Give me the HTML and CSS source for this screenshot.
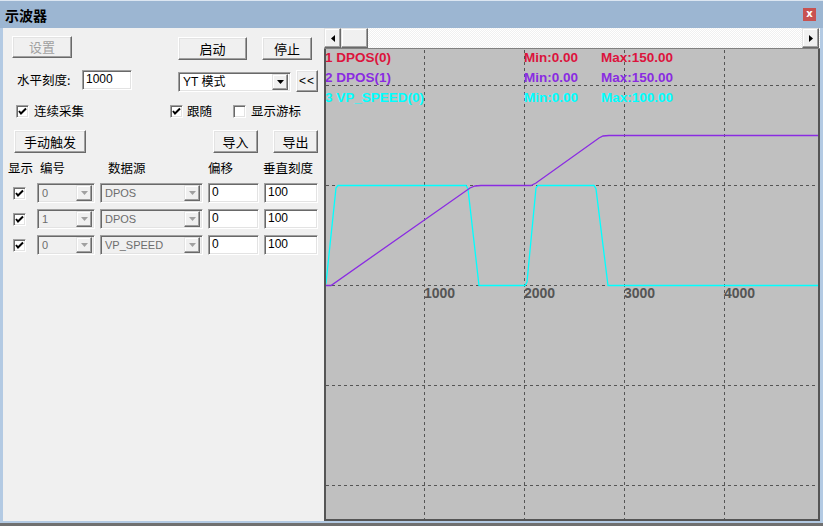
FILE: index.html
```html
<!DOCTYPE html>
<html>
<head>
<meta charset="utf-8">
<title>示波器</title>
<link rel="stylesheet" href="styles.css">
</head>
<body>
<div class="win">
  <div class="titlebar">
    <span class="title">示波器</span>
    <span class="close">x</span>
  </div>
  <div class="main">
    <div class="panel">
      <div class="row r1">
        <div class="btn disabled b-set">设置</div>
        <div class="btn b-start">启动</div>
        <div class="btn b-stop">停止</div>
      </div>
      <div class="row r2">
        <span class="lbl-scale">水平刻度:</span>
        <div class="edit e-scale">1000</div>
        <div class="combo c-mode">
          <span class="ctext">YT 模式</span>
          <span class="cbtn"><svg width="7" height="4" viewBox="0 0 7 4"><path d="M0 0H7L3.5 4Z" fill="#000"/></svg></span>
        </div>
        <div class="btn b-coll">&lt;&lt;</div>
      </div>
      <div class="row r3">
        <label class="chk w1"><span class="box"><svg width="9" height="9" viewBox="0 0 9 9"><path d="M1 4L3 6.5L8 1.5" fill="none" stroke="#000" stroke-width="2"/></svg></span>连续采集</label>
        <label class="chk w2"><span class="box"><svg width="9" height="9" viewBox="0 0 9 9"><path d="M1 4L3 6.5L8 1.5" fill="none" stroke="#000" stroke-width="2"/></svg></span>跟随</label>
        <label class="chk w3"><span class="box"></span>显示游标</label>
      </div>
      <div class="row r4">
        <div class="btn b-trig">手动触发</div>
        <div class="btn b-imp">导入</div>
        <div class="btn b-exp">导出</div>
      </div>
      <div class="grid ghead">
        <span class="h1">显示</span>
        <span class="h2">编号</span>
        <span class="h3">数据源</span>
        <span class="h4">偏移</span>
        <span class="h5">垂直刻度</span>
      </div>
      <div class="grid grow">
        <span class="cell-chk"><span class="box"><svg width="9" height="9" viewBox="0 0 9 9"><path d="M1 4L3 6.5L8 1.5" fill="none" stroke="#000" stroke-width="2"/></svg></span></span>
        <div class="combo dis"><span class="ctext">0</span><span class="cbtn"><svg width="7" height="4" viewBox="0 0 7 4"><path d="M0 0H7L3.5 4Z" fill="#a0a0a0"/></svg></span></div>
        <div class="combo dis"><span class="ctext">DPOS</span><span class="cbtn"><svg width="7" height="4" viewBox="0 0 7 4"><path d="M0 0H7L3.5 4Z" fill="#a0a0a0"/></svg></span></div>
        <div class="edit">0</div>
        <div class="edit">100</div>
      </div>
      <div class="grid grow">
        <span class="cell-chk"><span class="box"><svg width="9" height="9" viewBox="0 0 9 9"><path d="M1 4L3 6.5L8 1.5" fill="none" stroke="#000" stroke-width="2"/></svg></span></span>
        <div class="combo dis"><span class="ctext">1</span><span class="cbtn"><svg width="7" height="4" viewBox="0 0 7 4"><path d="M0 0H7L3.5 4Z" fill="#a0a0a0"/></svg></span></div>
        <div class="combo dis"><span class="ctext">DPOS</span><span class="cbtn"><svg width="7" height="4" viewBox="0 0 7 4"><path d="M0 0H7L3.5 4Z" fill="#a0a0a0"/></svg></span></div>
        <div class="edit">0</div>
        <div class="edit">100</div>
      </div>
      <div class="grid grow">
        <span class="cell-chk"><span class="box"><svg width="9" height="9" viewBox="0 0 9 9"><path d="M1 4L3 6.5L8 1.5" fill="none" stroke="#000" stroke-width="2"/></svg></span></span>
        <div class="combo dis"><span class="ctext">0</span><span class="cbtn"><svg width="7" height="4" viewBox="0 0 7 4"><path d="M0 0H7L3.5 4Z" fill="#a0a0a0"/></svg></span></div>
        <div class="combo dis"><span class="ctext">VP_SPEED</span><span class="cbtn"><svg width="7" height="4" viewBox="0 0 7 4"><path d="M0 0H7L3.5 4Z" fill="#a0a0a0"/></svg></span></div>
        <div class="edit">0</div>
        <div class="edit">100</div>
      </div>
    </div>
    <div class="chartcol">
      <div class="hscroll">
        <div class="sbtn"><svg width="4" height="7" viewBox="0 0 4 7"><path d="M4 0V7L0 3.5Z" fill="#000"/></svg></div>
        <div class="sbtn thumb"></div>
        <div class="track"></div>
        <div class="sbtn"><svg width="4" height="7" viewBox="0 0 4 7"><path d="M0 0V7L4 3.5Z" fill="#000"/></svg></div>
      </div>
      <svg class="chart" width="496" height="473" viewBox="0 0 496 473">
        <rect x="0" y="0" width="496" height="473" fill="#c0c0c0"/>
        <g stroke="#555555" stroke-width="1" stroke-dasharray="3 3">
          <line x1="100.5" y1="2" x2="100.5" y2="471"/>
          <line x1="200.5" y1="2" x2="200.5" y2="471"/>
          <line x1="300.5" y1="2" x2="300.5" y2="471"/>
          <line x1="400.5" y1="2" x2="400.5" y2="471"/>
          <line x1="2" y1="37.5" x2="494" y2="37.5"/>
          <line x1="2" y1="137.5" x2="494" y2="137.5"/>
          <line x1="2" y1="237.5" x2="494" y2="237.5"/>
          <line x1="2" y1="337.5" x2="494" y2="337.5"/>
          <line x1="2" y1="437.5" x2="494" y2="437.5"/>
        </g>
        <g class="axis">
          <text x="100" y="250">1000</text>
          <text x="200" y="250">2000</text>
          <text x="300" y="250">3000</text>
          <text x="400" y="250">4000</text>
        </g>
        <path fill="none" stroke="#00ffff" stroke-width="1.3" d="M1 237.5L2 235L12 140L14 137.5H142L144 141L155 237.5H201L203 234L212 140L214 137.5H270L272 141L284 237.5H494"/>
        <path fill="none" stroke="#8a2be2" stroke-width="1.3" d="M1 237.5H7L146 140L151 138L157 137.5H207L212 135L275 90L279 88L285 87.5H494"/>
        <g class="legend">
          <text x="1" y="14" fill="#dc143c">1 DPOS(0)</text>
          <text x="200" y="14" fill="#dc143c">Min:0.00</text>
          <text x="277" y="14" fill="#dc143c">Max:150.00</text>
          <text x="1" y="34" fill="#8a2be2">2 DPOS(1)</text>
          <text x="200" y="34" fill="#8a2be2">Min:0.00</text>
          <text x="277" y="34" fill="#8a2be2">Max:150.00</text>
          <text x="1" y="54" fill="#00ffff">3 VP_SPEED(0)</text>
          <text x="200" y="54" fill="#00ffff">Min:0.00</text>
          <text x="277" y="54" fill="#00ffff">Max:100.00</text>
        </g>
        <rect x="0" y="0" width="2" height="473" fill="#555555"/>
        <rect x="494" y="0" width="2" height="473" fill="#555555"/>
        <rect x="0" y="471" width="496" height="2" fill="#555555"/>
        <rect x="0" y="0" width="496" height="1" fill="#808080"/>
      </svg>
    </div>
  </div>
</div>
</body>
</html>
```

FILE: styles.css
```css
* { box-sizing: border-box; }
html, body { margin: 0; padding: 0; }
body {
  width: 823px;
  height: 526px;
  overflow: hidden;
  background: #707070;
  font-family: "Liberation Sans", "Noto Sans CJK SC", sans-serif;
  font-size: 12px;
  color: #000;
}
.win {
  width: 823px;
  height: 523px;
  display: flex;
  flex-direction: column;
  background: #b3cae3;
}
.titlebar {
  height: 28px;
  flex: none;
  display: flex;
  align-items: center;
  justify-content: space-between;
  padding: 0 7px 0 5px;
  background: #9cb6d2;
  border-top: 1px solid #dce6f1;
}
.title {
  font-family: "Noto Sans CJK SC", sans-serif;
  font-weight: bold;
  font-size: 14px;
  line-height: 16px;
}
.close {
  width: 13px;
  height: 13px;
  background: #c85250;
  color: #fff;
  font-family: "DejaVu Sans", sans-serif;
  font-weight: bold;
  font-size: 10px;
  line-height: 12px;
  text-align: center;
}
.main {
  flex: 1;
  display: flex;
  padding: 0 3px 2px 3px;
}
.panel {
  width: 321px;
  flex: none;
  background: #f0f0f0;
  font-family: "Noto Sans CJK SC", sans-serif;
  font-size: 12px;
}
.row { display: flex; }
.btn {
  display: flex;
  align-items: center;
  justify-content: center;
  background: #f0f0f0;
  border: 1px solid;
  border-color: #ffffff #696969 #696969 #ffffff;
  box-shadow: inset -1px -1px 0 #a0a0a0, inset 1px 1px 0 #e3e3e3;
  font-size: 13px;
  line-height: 14px;
  color: #000;
}
.btn.disabled { color: #a0a0a0; }
.r1 { margin-top: 8px; height: 24px; align-items: flex-start; }
.b-set { margin-left: 9px; width: 60px; height: 22px; }
.b-start { margin-left: 106px; width: 69px; height: 23px; margin-top: 1px; }
.b-stop { margin-left: 15px; width: 50px; height: 23px; margin-top: 1px; }

.r2 { margin-top: 10px; height: 22px; align-items: flex-start; }
.lbl-scale { margin-left: 14px; width: 65px; line-height: 20px; font-size: 12.5px; }
.edit {
  height: 20px;
  background: #fff;
  border: 1px solid;
  border-color: #a0a0a0 #ffffff #ffffff #a0a0a0;
  box-shadow: inset 1px 1px 0 #696969, inset -1px -1px 0 #e3e3e3;
  font-family: "Liberation Sans", sans-serif;
  font-size: 12px;
  line-height: 17px;
  padding-left: 3px;
}
.e-scale { width: 50px; }
.combo {
  display: flex;
  align-items: center;
  height: 20px;
  background: #fff;
  border: 1px solid;
  border-color: #a0a0a0 #ffffff #ffffff #a0a0a0;
  box-shadow: inset 1px 1px 0 #696969, inset -1px -1px 0 #e3e3e3;
  padding: 2px;
}
.ctext {
  flex: 1;
  font-family: "Liberation Sans", "Noto Sans CJK SC", sans-serif;
  font-size: 12px;
  line-height: 14px;
  padding-left: 2px;
  white-space: nowrap;
  overflow: hidden;
}
.cbtn {
  width: 16px;
  height: 16px;
  flex: none;
  display: flex;
  align-items: center;
  justify-content: center;
  background: #f0f0f0;
  border: 1px solid;
  border-color: #e3e3e3 #696969 #696969 #e3e3e3;
  box-shadow: inset -1px -1px 0 #a0a0a0, inset 1px 1px 0 #fff;
}
.c-mode { margin-left: 46px; margin-top: 2px; width: 113px; }
.b-coll { margin-left: 5px; width: 22px; height: 22px; font-family: "Liberation Sans", sans-serif; font-size: 12px; letter-spacing: 1px; }

.r3 { margin-top: 9px; height: 20px; align-items: center; }
.chk { display: flex; align-items: center; font-size: 12.5px; line-height: 16px; white-space: nowrap; }
.box {
  width: 13px;
  height: 13px;
  flex: none;
  display: inline-flex;
  align-items: center;
  justify-content: center;
  background: #fff;
  border: 1px solid;
  border-color: #a0a0a0 #ffffff #ffffff #a0a0a0;
  box-shadow: inset 1px 1px 0 #696969, inset -1px -1px 0 #e3e3e3;
}
.chk .box { margin-right: 5px; }
.w1 { margin-left: 13px; width: 154px; }
.w2 { width: 63px; }
.w2 .box { margin-right: 4px; }

.r4 { margin-top: 9px; height: 23px; }
.b-trig { margin-left: 11px; width: 72px; height: 23px; }
.b-imp { margin-left: 127px; width: 45px; height: 23px; }
.b-exp { margin-left: 15px; width: 45px; height: 23px; }

.grid {
  display: grid;
  grid-template-columns: 29px 58px 103px 51px 54px;
  column-gap: 5px;
  align-items: center;
}
.ghead { margin-top: 4px; height: 22px; font-size: 12.5px; line-height: 16px; }
.ghead span { white-space: nowrap; }
.h1 { padding-left: 5px; }
.h2 { padding-left: 3px; }
.h3 { padding-left: 8px; }
.h5 { margin-left: -1px; }
.grow { margin-top: 3px; height: 22px; }
.grow + .grow { margin-top: 4px; }
.cell-chk { padding-left: 10px; display: flex; }
.combo.dis { background: #f0f0f0; }
.combo.dis .ctext { color: #6d6d6d; font-size: 11px; }
.combo.dis .cbtn { background: #f0f0f0; }

.chartcol {
  width: 496px;
  flex: none;
  display: flex;
  flex-direction: column;
}
.hscroll {
  height: 20px;
  flex: none;
  display: flex;
  background: repeating-conic-gradient(#f0f0f0 0 25%, #ffffff 0 50%) 0 0 / 2px 2px;
  padding-right: 1px;
}
.sbtn {
  width: 17px;
  height: 20px;
  flex: none;
  display: flex;
  align-items: center;
  justify-content: center;
  background: #f0f0f0;
  border: 1px solid;
  border-color: #e3e3e3 #696969 #696969 #e3e3e3;
  box-shadow: inset -1px -1px 0 #a0a0a0, inset 1px 1px 0 #fff;
}
.thumb { width: 27px; }
.track { flex: 1; }
.chart { display: block; flex: none; }
.axis text {
  font-family: "Liberation Sans", sans-serif;
  font-weight: bold;
  font-size: 14px;
  fill: #555555;
}
.legend text {
  font-family: "Liberation Sans", sans-serif;
  font-weight: bold;
  font-size: 13.5px;
}
```
